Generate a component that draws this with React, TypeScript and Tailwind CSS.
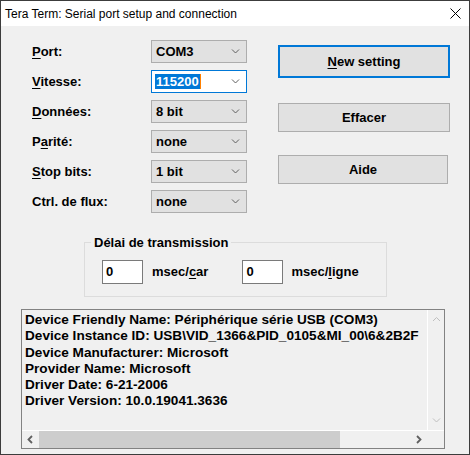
import React from 'react';

const font = { fontFamily: '"Liberation Sans", Arial, sans-serif' };

const Chevron: React.FC<{ dir?: 'down' | 'up' | 'left' | 'right'; color?: string }> = ({ dir = 'down', color = '#606060' }) => {
  const paths: Record<string, string> = {
    down: 'M1 1.5 L4.5 5 L8 1.5',
    up: 'M1 5 L4.5 1.5 L8 5',
    left: 'M5 1 L1.5 4.5 L5 8',
    right: 'M2 1 L5.5 4.5 L2 8',
  };
  const horiz = dir === 'left' || dir === 'right';
  return (
    <svg width={horiz ? 7 : 9} height={horiz ? 9 : 7} viewBox={horiz ? '0 0 7 9' : '0 0 9 7'} fill="none">
      <path d={paths[dir]} stroke={color} strokeWidth={horiz ? 1.8 : 1} />
    </svg>
  );
};

const Mn: React.FC<{ children: React.ReactNode }> = ({ children }) => <span className="underline underline-offset-2">{children}</span>;

const Combo: React.FC<{ value: string; focused?: boolean }> = ({ value, focused }) => (
  <div
    className={`h-[23px] w-[96px] flex items-center justify-between pl-[3px] pr-[6px] border ${
      focused ? 'bg-white border-[#0078d7]' : 'bg-[#e1e1e1] border-[#adadad]'
    }`}
  >
    {focused ? (
      <span className="flex items-center">
        <span className="bg-[#0078d7] text-white leading-[15px] px-[1px]">{value}</span>
        <span className="w-px h-[15px] bg-[#ff8000]" />
      </span>
    ) : (
      <span className="pl-[1px]">{value}</span>
    )}
    <Chevron />
  </div>
);

const rows: { label: React.ReactNode; value: string; focused?: boolean }[] = [
  { label: <><Mn>P</Mn>ort:</>, value: 'COM3' },
  { label: <><Mn>V</Mn>itesse:</>, value: '115200', focused: true },
  { label: <><Mn>D</Mn>onnées:</>, value: '8 bit' },
  { label: <>P<Mn>a</Mn>rité:</>, value: 'none' },
  { label: <><Mn>S</Mn>top bits:</>, value: '1 bit' },
  { label: <>Ctrl. de flux:</>, value: 'none' },
];

const info = [
  'Device Friendly Name: Périphérique série USB (COM3)',
  'Device Instance ID: USB\\VID_1366&PID_0105&MI_00\\6&2B2F',
  'Device Manufacturer: Microsoft',
  'Provider Name: Microsoft',
  'Driver Date: 6-21-2006',
  'Driver Version: 10.0.19041.3636',
];

const App: React.FC = () => {
  return (
    <div className="w-[470px] h-[455px] border border-[#3c3c3c] flex flex-col bg-[#f0f0f0] text-black" style={font}>
      {/* Title bar */}
      <div className="h-[25px] bg-white flex items-center justify-between pl-[4px] pr-[8px] text-[12px]">
        <span>Tera Term: Serial port setup and connection</span>
        <svg width="11" height="11" viewBox="0 0 11 11">
          <path d="M0.5 0.5 L10.5 10.5 M10.5 0.5 L0.5 10.5" stroke="#000" strokeWidth="1" />
        </svg>
      </div>

      <div className="flex-1 flex flex-col text-[13px] font-bold">
        {/* Top section */}
        <div className="flex pt-[14px] pl-[31px]">
          <div className="flex flex-col gap-[7px]">
            {rows.map((r, i) => (
              <div key={i} className="flex items-center">
                <div className="w-[119px]">{r.label}</div>
                <Combo value={r.value} focused={r.focused} />
              </div>
            ))}
          </div>
          <div className="flex flex-col ml-[31px] pt-[5px]">
            <button className="w-[172px] h-[33px] bg-[#e1e1e1] border-2 border-[#0078d7] font-bold">
              <Mn>N</Mn>ew setting
            </button>
            <button className="w-[172px] h-[29px] mt-[25px] bg-[#e1e1e1] border border-[#adadad] font-bold">
              Effacer
            </button>
            <button className="w-[170px] h-[29px] mt-[23px] bg-[#e1e1e1] border border-[#adadad] font-bold">
              Aide
            </button>
          </div>
        </div>

        {/* Group box */}
        <div className="relative ml-[83px] mt-[29px] w-[303px] h-[55px] border border-[#dcdcdc] flex items-center pl-[17px] pt-[4px]">
          <span className="absolute -top-[10px] left-[6px] bg-[#f0f0f0] px-[3px]">Délai de transmission</span>
          <div className="w-[41px] h-[24px] bg-white border border-[#7a7a7a] pl-[3px] leading-[22px]">0</div>
          <span className="ml-[9px]">msec/<Mn>c</Mn>ar</span>
          <div className="w-[41px] h-[24px] bg-white border border-[#7a7a7a] pl-[3px] leading-[22px] ml-[34px]">0</div>
          <span className="ml-[8px]">msec/<Mn>l</Mn>igne</span>
        </div>

        {/* Info box */}
        <div className="ml-[20px] mt-[12px] w-[424px] h-[140px] border border-[#828282] flex flex-col">
          <div className="flex flex-1 min-h-0">
            <div className="flex-1 overflow-hidden whitespace-nowrap pl-[3px] pt-[2px] leading-[16.3px] text-[13.6px]">
              {info.map((l, i) => (
                <div key={i}>{l}</div>
              ))}
            </div>
            <div className="w-[17px] flex flex-col items-center justify-between py-[6px] border-l border-white">
              <Chevron dir="up" color="#bfbfbf" />
              <Chevron dir="down" color="#bfbfbf" />
            </div>
          </div>
          <div className="h-[18px] flex items-center border-t border-white">
            <div className="w-[17px] flex justify-center"><Chevron dir="left" /></div>
            <div className="flex-1 h-full flex items-center">
              <div className="w-[301px] h-full bg-[#cdcdcd]" />
            </div>
            <div className="w-[17px] flex justify-center"><Chevron dir="right" /></div>
            <div className="w-[17px] h-full" />
          </div>
        </div>
      </div>
    </div>
  );
};

export default App;
